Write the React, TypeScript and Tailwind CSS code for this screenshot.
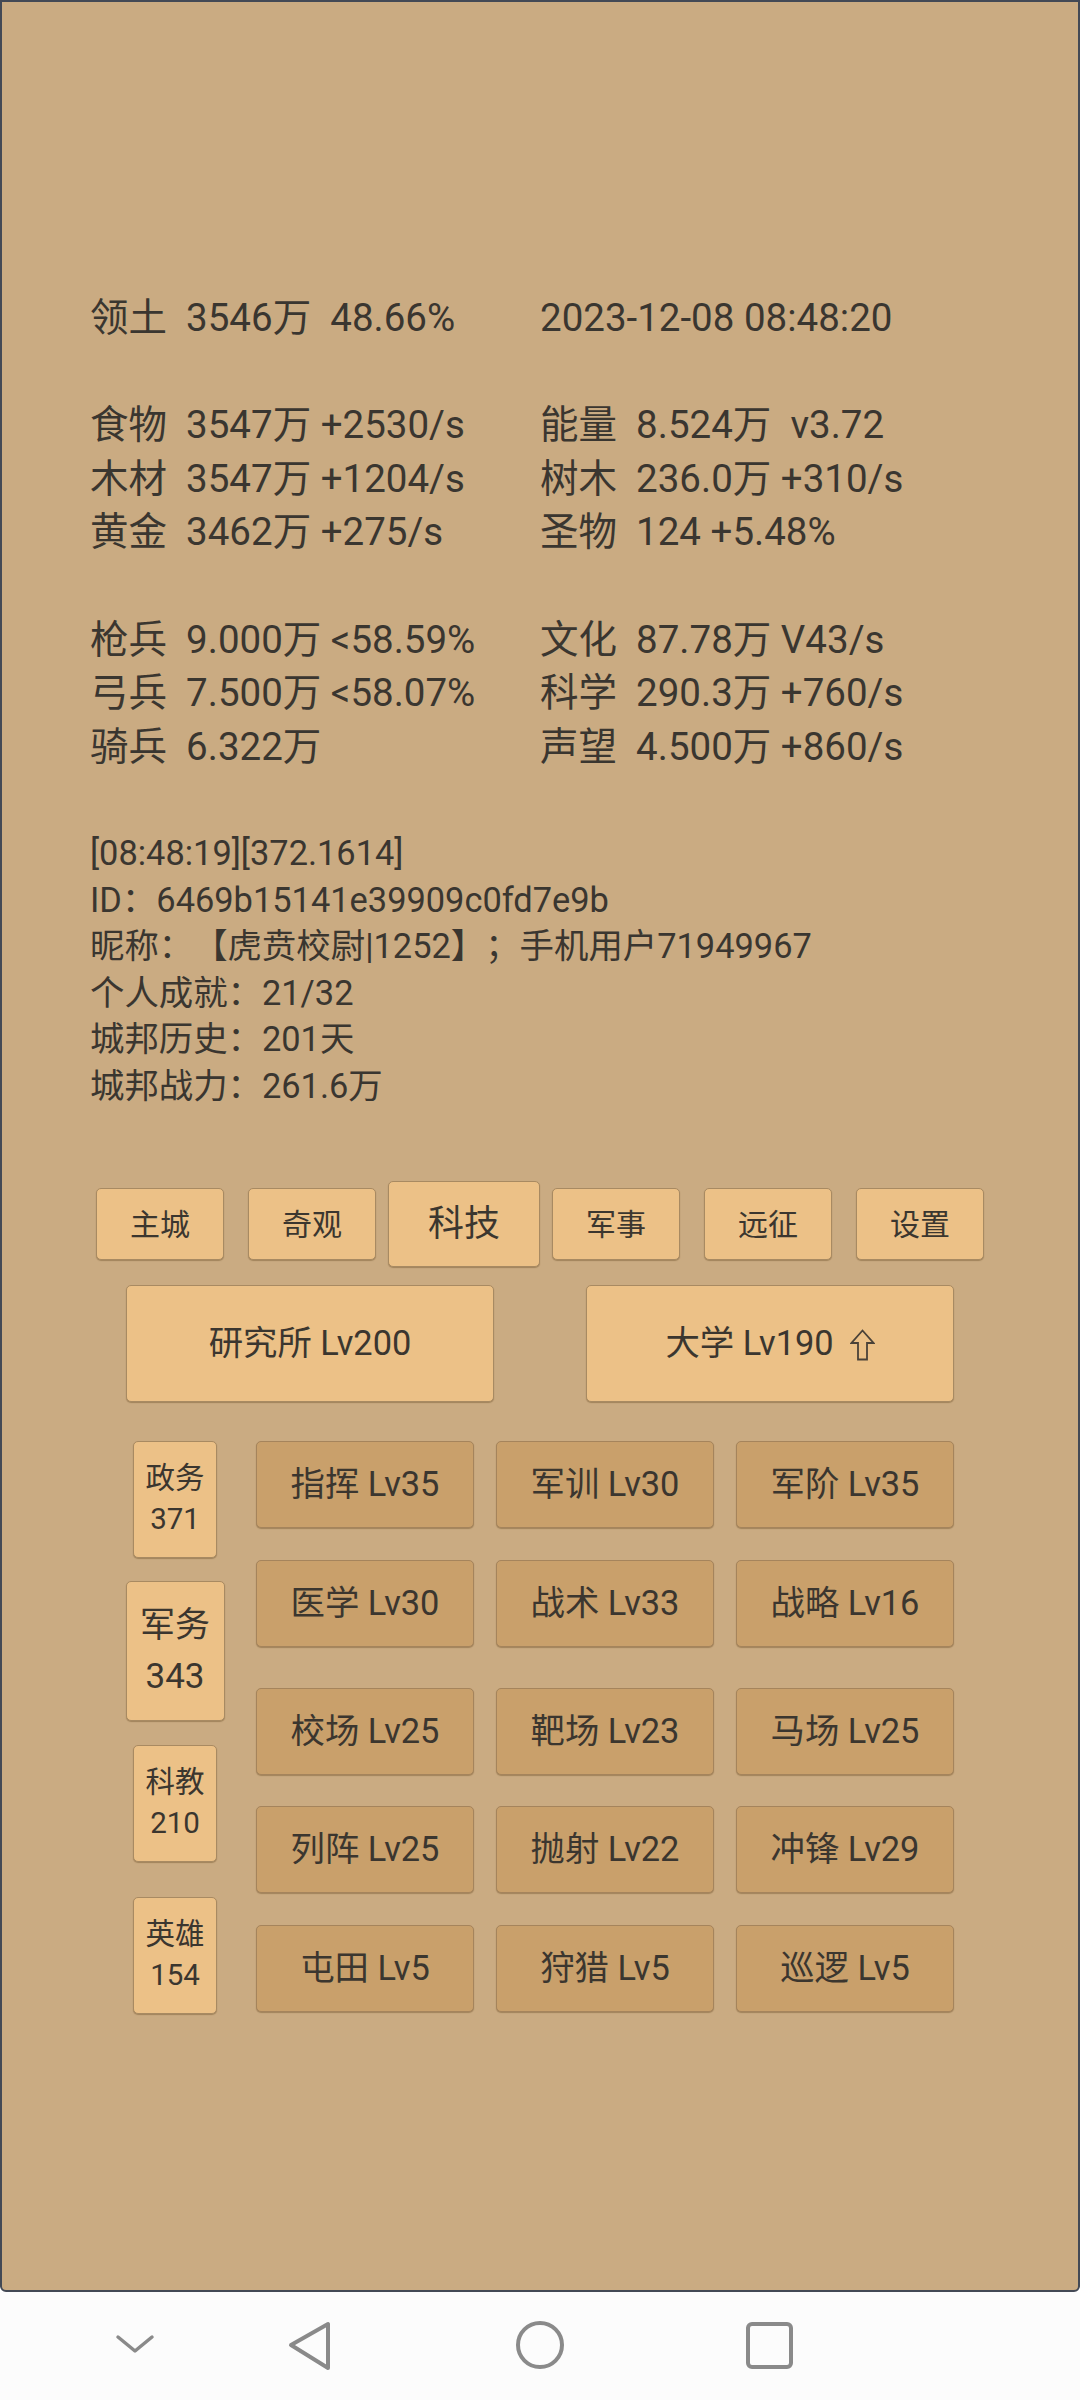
import React from "react";

const stats: [string, string][] = [
  ["领土  3546万  48.66%", "2023-12-08 08:48:20"],
  ["", ""],
  ["食物  3547万 +2530/s", "能量  8.524万  v3.72"],
  ["木材  3547万 +1204/s", "树木  236.0万 +310/s"],
  ["黄金  3462万 +275/s", "圣物  124 +5.48%"],
  ["", ""],
  ["枪兵  9.000万 <58.59%", "文化  87.78万 V43/s"],
  ["弓兵  7.500万 <58.07%", "科学  290.3万 +760/s"],
  ["骑兵  6.322万", "声望  4.500万 +860/s"],
];

const info = [
  "[08:48:19][372.1614]",
  "ID：6469b15141e39909c0fd7e9b",
  "昵称：【虎贲校尉|1252】；手机用户71949967",
  "个人成就：21/32",
  "城邦历史：201天",
  "城邦战力：261.6万",
];

const tabs = ["主城", "奇观", "科技", "军事", "远征", "设置"];

const categories: { name: string; value: string; active?: boolean }[] = [
  { name: "政务", value: "371" },
  { name: "军务", value: "343", active: true },
  { name: "科教", value: "210" },
  { name: "英雄", value: "154" },
];

const grid: string[][] = [
  ["指挥 Lv35", "军训 Lv30", "军阶 Lv35"],
  ["医学 Lv30", "战术 Lv33", "战略 Lv16"],
  ["校场 Lv25", "靶场 Lv23", "马场 Lv25"],
  ["列阵 Lv25", "抛射 Lv22", "冲锋 Lv29"],
  ["屯田 Lv5", "狩猎 Lv5", "巡逻 Lv5"],
];

const rowMargins = ["mt-0", "mt-[32px]", "mt-[41px]", "mt-[31px]", "mt-[32px]"];

const lightBtn =
  "bg-[#ecc187] border-[1.5px] border-[#a88a62] rounded-[5px] shadow-[0_1px_1px_rgba(90,60,20,0.35)] flex items-center justify-center text-[#3b362f]";
const darkBtn =
  "bg-[#c9a06b] border-[1.5px] border-[#a5845c] rounded-[5px] shadow-[0_1px_1px_rgba(90,60,20,0.35)] flex items-center justify-center text-[#3b362f]";

export default function App() {
  return (
    <div className="w-[1080px] h-[2400px] flex flex-col font-[Roboto,'Noto_Sans_CJK_SC',sans-serif] overflow-hidden [text-spacing-trim:space-all]">
      <div className="h-[2292px] bg-[#caab82] border-2 border-[#434955] rounded-b-[6px] flex flex-col">
        {/* stats */}
        <div className="pt-[289px] pl-[88px] text-[38.5px] leading-[53.6px] text-[#3a3630]">
          {stats.map(([l, r], i) => (
            <div key={i} className="grid grid-cols-[450px_1fr] h-[53.6px] whitespace-pre">
              <span>{l}</span>
              <span>{r}</span>
            </div>
          ))}
        </div>

        {/* info */}
        <div className="mt-[57px] pl-[88px] text-[34.4px] leading-[46.5px] text-[#3a3630] whitespace-pre [text-spacing-trim:space-all]">
          {info.map((t, i) => (
            <div key={i}>{t}</div>
          ))}
        </div>

        {/* tabs */}
        <div className="mt-[72px] flex justify-center items-center h-[86px]">
          {tabs.map((t) => {
            const active = t === "科技";
            return (
              <div key={t} className="w-[152px] flex justify-center">
                {active ? (
                  <div className={`${lightBtn} w-[153px] h-[86px] text-[36px]`}>{t}</div>
                ) : (
                  <div className={`${lightBtn} w-[128px] h-[72px] text-[30px]`}>{t}</div>
                )}
              </div>
            );
          })}
        </div>

        {/* big buttons */}
        <div className="mt-[18px] flex justify-center gap-[92px]">
          <div className={`${lightBtn} w-[368px] h-[117px] text-[34.4px]`}>研究所 Lv200</div>
          <div className={`${lightBtn} w-[368px] h-[117px] text-[34.4px] whitespace-pre`}>
            <span>大学 Lv190</span>
            <svg className="ml-[16px] mt-[2px]" width="25" height="32" viewBox="0 0 25 32">
              <path
                d="M12.5 1.5 L23.5 14 L17 14 L17 30.5 L8 30.5 L8 14 L1.5 14 Z"
                fill="none"
                stroke="#4a4238"
                strokeWidth="1.8"
                strokeLinejoin="miter"
              />
            </svg>
          </div>
        </div>

        {/* lower section */}
        <div className="mt-[21px] flex pl-[97px]">
          <div className="w-[152px] flex flex-col">
            {categories.map((c) => (
              <div key={c.name} className="h-[152px] flex items-center justify-center">
                {c.active ? (
                  <div className={`${lightBtn} w-[99px] h-[140px] flex-col text-[35px] leading-[51px]`}>
                    <span>{c.name}</span>
                    <span>{c.value}</span>
                  </div>
                ) : (
                  <div className={`${lightBtn} w-[84px] h-[117px] flex-col text-[29.5px] leading-[41px]`}>
                    <span>{c.name}</span>
                    <span>{c.value}</span>
                  </div>
                )}
              </div>
            ))}
          </div>
          <div className="ml-[5px] mt-[18px] flex flex-col">
            {grid.map((row, ri) => (
              <div key={ri} className={`${rowMargins[ri]} flex gap-[22px]`}>
                {row.map((cell) => (
                  <div key={cell} className={`${darkBtn} w-[218px] h-[87px] text-[34.4px] whitespace-pre`}>
                    {cell}
                  </div>
                ))}
              </div>
            ))}
          </div>
        </div>
      </div>

      {/* nav bar */}
      <div className="flex-1 bg-[#fcfcfc] relative">
        <svg className="absolute left-[112px] top-[38px]" width="46" height="28" viewBox="0 0 46 28">
          <polyline points="6,7 23,21 40,7" fill="none" stroke="#8a8a8a" strokeWidth="3.5" strokeLinecap="round" strokeLinejoin="round" />
        </svg>
        <svg className="absolute left-[284px] top-[26px]" width="52" height="56" viewBox="0 0 52 56">
          <path d="M44 6 L44 50 L7 27 Z" fill="none" stroke="#8a8a8a" strokeWidth="4" strokeLinejoin="round" />
        </svg>
        <svg className="absolute left-[513px] top-[26px]" width="54" height="54" viewBox="0 0 54 54">
          <circle cx="27" cy="27" r="22" fill="none" stroke="#8a8a8a" strokeWidth="4" />
        </svg>
        <svg className="absolute left-[744px] top-[28px]" width="52" height="52" viewBox="0 0 52 52">
          <rect x="4" y="4" width="43" height="43" rx="4" fill="none" stroke="#8a8a8a" strokeWidth="4" />
        </svg>
      </div>
    </div>
  );
}
